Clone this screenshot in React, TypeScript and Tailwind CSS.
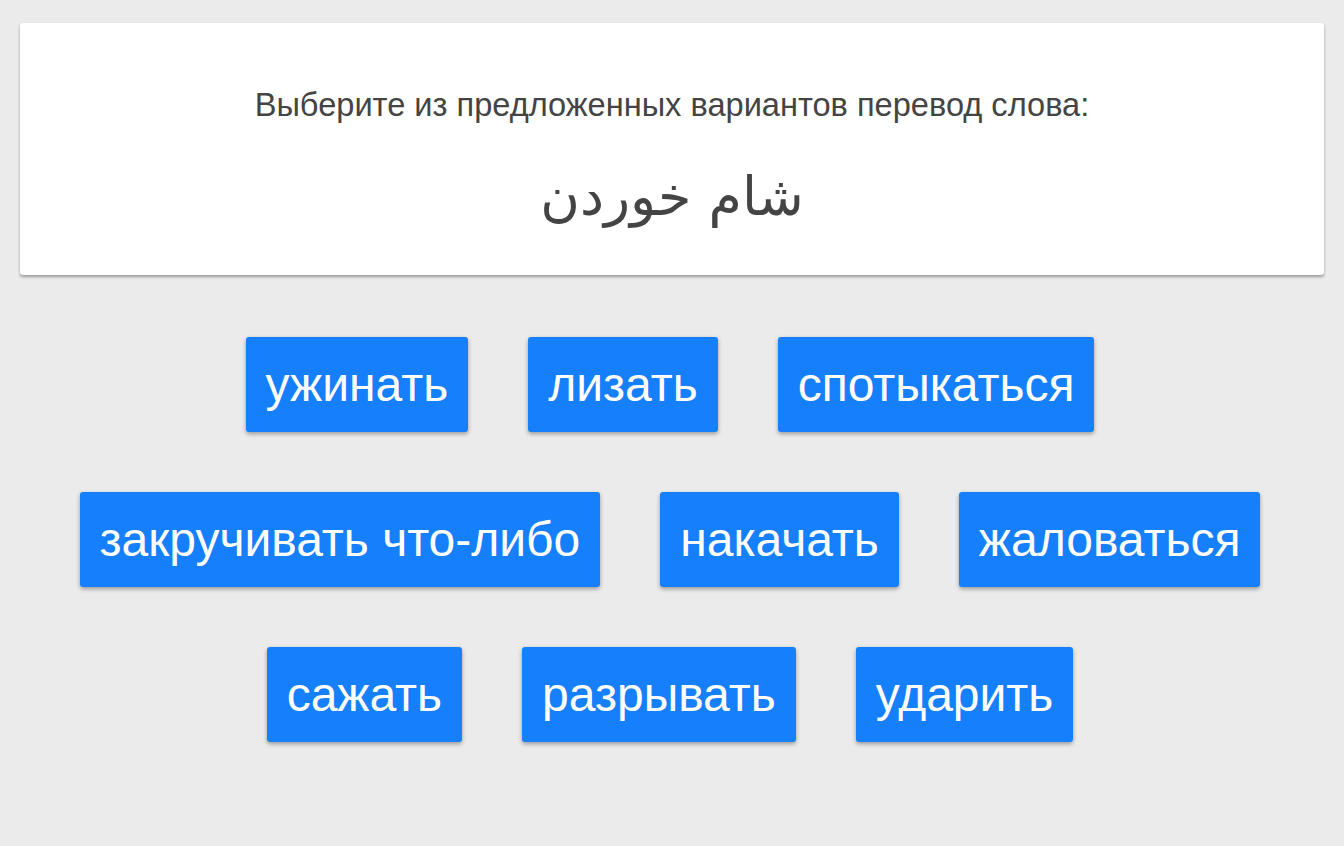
const rows: string[][] = [
  ["ужинать", "лизать", "спотыкаться"],
  ["закручивать что-либо", "накачать", "жаловаться"],
  ["сажать", "разрывать", "ударить"],
];

function Choice({ label }: { label: string }) {
  return (
    <button className="h-[95px] px-5 flex items-center rounded-[3px] bg-[#167ffc] text-white text-[48px] leading-none shadow-[0_2px_4px_rgba(0,0,0,0.35)] font-['Liberation_Sans',Arial,sans-serif]">
      {label}
    </button>
  );
}

export default function App() {
  return (
    <div className="min-h-[846px] bg-[#ebebeb] pt-[23px] px-5 font-['Liberation_Sans',Arial,sans-serif]">
      <div className="bg-white rounded-[3px] h-[252px] flex flex-col items-center shadow-[0_2px_3px_rgba(0,0,0,0.35)]">
        <p className="mt-[64px] text-[32.6px] leading-[36px] text-[#444]">
          Выберите из предложенных вариантов перевод слова:
        </p>
        <p
          dir="rtl"
          className="mt-[42px] text-[54px] leading-[64px] text-[#444] font-['DejaVu_Sans',sans-serif]"
        >
          شام خوردن
        </p>
      </div>
      <div className="pt-[62px] pr-[4px] flex flex-col items-center gap-[60px]">
        {rows.map((row, i) => (
          <div key={i} className="flex justify-center gap-[60px]">
            {row.map((w) => (
              <Choice key={w} label={w} />
            ))}
          </div>
        ))}
      </div>
    </div>
  );
}
